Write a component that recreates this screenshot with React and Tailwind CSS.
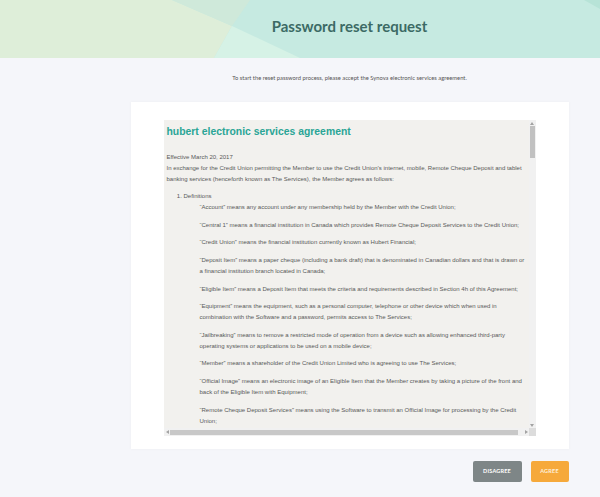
import React from "react";

const definitions = [
  "\u201CAccount\u201D means any account under any membership held by the Member with the Credit Union;",
  "\u201CCentral 1\u201D means a financial institution in Canada which provides Remote Cheque Deposit Services to the Credit Union;",
  "\u201CCredit Union\u201D means the financial institution currently known as Hubert Financial;",
  "\u201CDeposit Item\u201D means a paper cheque (including a bank draft) that is denominated in Canadian dollars and that is drawn or a financial institution branch located in Canada;",
  "\u201CEligible Item\u201D means a Deposit Item that meets the criteria and requirements described in Section 4h of this Agreement;",
  "\u201CEquipment\u201D means the equipment, such as a personal computer, telephone or other device which when used in combination with the Software and a password, permits access to The Services;",
  "\u201CJailbreaking\u201D means to remove a restricted mode of operation from a device such as allowing enhanced third-party operating systems or applications to be used on a mobile device;",
  "\u201CMember\u201D means a shareholder of the Credit Union Limited who is agreeing to use The Services;",
  "\u201COfficial Image\u201D means an electronic image of an Eligible Item that the Member creates by taking a picture of the front and back of the Eligible Item with Equipment;",
  "\u201CRemote Cheque Deposit Services\u201D means using the Software to transmit an Official Image for processing by the Credit Union;",
];

const HeaderArt = () => (
  <svg
    className="absolute inset-0 h-full w-full"
    viewBox="0 0 600 58"
    preserveAspectRatio="none"
  >
    <rect width="600" height="58" fill="#c6eae1" />
    <polygon points="0,0 172,0 232,26 214,58 0,58" fill="#deeed9" />
    <polygon points="172,0 250,0 232,26" fill="#cfe9da" />
    <polygon points="232,26 300,58 214,58" fill="#d6f2e6" />
    <polygon points="584,0 600,0 600,9" fill="#b7e3d7" />
  </svg>
);

const Arrow = ({ dir }) => {
  const pts = {
    up: "0,4 2,1 4,4",
    down: "0,1 2,4 4,1",
    left: "4,0 1,2 4,4",
    right: "1,0 4,2 1,4",
  };
  return (
    <svg width="4" height="5" viewBox="0 0 4 5">
      <polygon points={pts[dir]} fill="#a3a3a3" />
    </svg>
  );
};

export default function App() {
  return (
    <div className="min-h-[497px] bg-[#f5f6fa] font-['Lato',sans-serif]">
      <header className="relative h-[58px] overflow-hidden">
        <HeaderArt />
        <div className="relative flex h-full items-center justify-center pb-[6px] pl-[99px]">
          <h1 className="text-[15px] font-bold text-[#3c6a65]">
            Password reset request
          </h1>
        </div>
      </header>

      <main className="pl-[99px]">
        <p className="mt-[15px] text-center text-[5.8px] leading-[10px] text-[#555]">
          To start the reset password process, please accept the Synova
          electronic services agreement.
        </p>

        <section className="mx-auto mt-[19px] w-[438px] bg-white px-[33px] pb-[13px] pt-[18px] shadow-[0_0_3px_rgba(0,0,0,0.04)]">
          <div className="flex h-[316px] flex-col bg-[#f2f1ee]">
            <div className="flex min-h-0 flex-1">
              <div className="min-w-0 flex-1 overflow-hidden pl-[3px] pt-[5px] font-['Liberation_Sans',Arial,sans-serif] text-[6px] leading-[11px] text-[#595959]">
                <div className="w-[361px]">
                  <h2 className="mb-[12.5px] text-[10.4px] font-bold leading-[14px] text-[#2aa596]">
                    hubert electronic services agreement
                  </h2>
                  <p className="mb-[6.7px]">
                    Effective March 20, 2017
                    <br />
                    In exchange for the Credit Union permitting the Member to
                    use the Credit Union&rsquo;s internet, mobile, Remote Cheque
                    Deposit and tablet banking services (henceforth known as
                    The Services), the Member agrees as follows:
                  </p>
                  <ol className="list-decimal pl-[17px]">
                    <li>
                      Definitions
                      <div className="pl-[16px]">
                        {definitions.map((d, i) => (
                          <p key={i} className="mb-[6.6px]">
                            {d}
                          </p>
                        ))}
                      </div>
                    </li>
                  </ol>
                </div>
              </div>

              {/* vertical scrollbar */}
              <div className="flex w-[7px] flex-col items-center bg-[#f1f1f1]">
                <div className="flex h-[6px] items-center">
                  <Arrow dir="up" />
                </div>
                <div className="h-[32px] w-[5px] bg-[#c1c1c1]" />
                <div className="flex-1" />
                <div className="flex h-[6px] items-center">
                  <Arrow dir="down" />
                </div>
              </div>
            </div>

            {/* horizontal scrollbar */}
            <div className="flex h-[8px]">
              <div className="flex flex-1 items-center bg-[#f1f1f1]">
                <div className="flex w-[6px] justify-center">
                  <Arrow dir="left" />
                </div>
                <div className="h-[5px] w-[348px] bg-[#c8c8c8]" />
                <div className="flex-1" />
                <div className="flex w-[6px] justify-center">
                  <Arrow dir="right" />
                </div>
              </div>
              <div className="w-[7px] bg-[#dcdcdc]" />
            </div>
          </div>
        </section>

        <div className="mx-auto mt-[12px] flex w-[438px] justify-end gap-[9px]">
          <button className="h-[21px] w-[49px] rounded-[2px] bg-[#7e8687] text-[5.5px] font-bold tracking-[0.2px] text-white">
            DISAGREE
          </button>
          <button className="h-[21px] w-[38px] rounded-[2px] bg-[#f6a93b] text-[5.5px] font-bold tracking-[0.2px] text-[#fdf0dc]">
            AGREE
          </button>
        </div>
      </main>
    </div>
  );
}
